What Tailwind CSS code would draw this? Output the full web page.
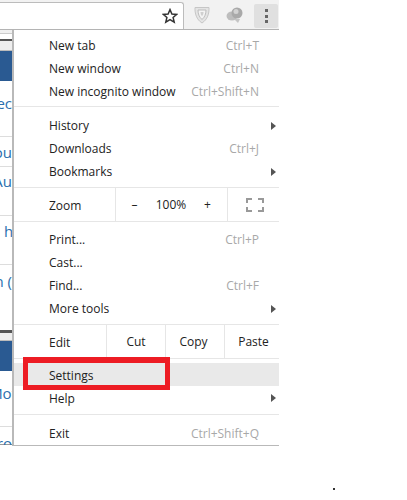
<!DOCTYPE html>
<html lang="en">
<head>
    <meta charset="UTF-8">
    <title>Chrome menu</title>
    <script src="https://cdn.jsdelivr.net/npm/@tailwindcss/browser@4"></script>
</head>
<body class="bg-white font-['Open_Sans','Noto_Sans',sans-serif] text-[12px] text-[#222]">
<div class="relative h-[500px] w-[407px] overflow-hidden">

    <!-- Toolbar -->
    <div class="flex h-[30px] w-[279px] border-b border-[#b4b4b4] bg-[#f2f2f2]">
        <div class="mt-[2px] flex h-[27px] w-[184px] items-center justify-end rounded-tr-[3px] border-t border-r border-[#bcbcbc] bg-white pr-[5px]">
            <svg class="h-[16px] w-[16px]" viewBox="0 0 16 16"><path d="M8 1.6l1.9 4.4 4.8.4-3.6 3.1 1.1 4.7L8 11.7l-4.2 2.5 1.1-4.7L1.3 6.400l4.800-.4z" fill="none" stroke="#333" stroke-width="1.500"/></svg>
        </div>
        <div class="ml-[9px] flex w-[18px] items-center justify-center">
            <svg class="h-[18px] w-[16px]" viewBox="0 0 16 18"><path d="M1 1.500h14c.3 6-1.500 12-7 15.500C2.500 13.500.7 7.500 1 1.500z" fill="#e4e4e4" stroke="#c6c6c6"/><path d="M4 4h8c0 4-1.200 7-4 9.500C5.200 11 4 8 4 4z" fill="#f4f4f4" stroke="#bdbdbd"/><path d="M6.500 6h3c0 2-.5 3-1.500 4.200C7 9 6.500 8 6.500 6z" fill="#cfcfcf"/></svg>
        </div>
        <div class="ml-[14px] flex w-[20px] items-center justify-center">
            <svg class="h-[18px] w-[18px]" viewBox="0 0 18 18"><ellipse cx="6" cy="10" rx="5.500" ry="4.500" fill="#bdbdbd"/><circle cx="11" cy="7" r="5.500" fill="#a9a9a9"/><circle cx="10" cy="5.500" r="2.500" fill="#d2d2d2"/><path d="M8 13h6l-2 4z" fill="#c4c4c4"/></svg>
        </div>
        <div class="mt-[4px] ml-[9px] flex h-[24px] w-[24px] flex-col items-center justify-center gap-[2.500px] rounded-[2px] bg-[#e0e0e0]">
            <span class="h-[3px] w-[3px] bg-[#666]"></span>
            <span class="h-[3px] w-[3px] bg-[#666]"></span>
            <span class="h-[3px] w-[3px] bg-[#666]"></span>
        </div>
    </div>

    <div class="flex w-[279px]">
        <!-- Page behind the menu -->
        <div class="flex h-[415px] w-[12px] flex-col items-end overflow-hidden text-[15px] leading-[20px] whitespace-nowrap text-[#2a6fae]">
            <div class="h-[4px] w-full shrink-0 border-b border-[#ccc] bg-[#f0f0f0]"></div>
            <div class="h-[7px] w-full shrink-0 border-b-2 border-[#555] bg-white"></div>
            <div class="h-[10px] w-full shrink-0 border-b border-[#bbb] bg-[#eeeeee]"></div>
            <div class="h-[30px] w-full shrink-0 bg-[#2a5a92]"></div>
            <div class="flex h-[56px] w-full shrink-0 justify-end border-b border-[#ddd] pt-[12px]">rec</div>
            <div class="flex h-[30px] w-full shrink-0 justify-end border-b border-[#ddd] pt-[5px]">ou</div>
            <div class="flex h-[49px] w-full shrink-0 justify-end border-b border-[#ddd] pt-[4px]">Au</div>
            <div class="flex h-[49px] w-full shrink-0 justify-start border-b border-[#ddd] pt-[5px] pl-[4px]">h</div>
            <div class="flex h-[65px] w-full shrink-0 justify-end pt-[6px]">n (</div>
            <div class="h-[3px] w-full shrink-0 bg-[#555]"></div>
            <div class="h-[8px] w-full shrink-0 border-b border-[#bbb] bg-[#eeeeee]"></div>
            <div class="h-[30px] w-full shrink-0 bg-[#2a5a92]"></div>
            <div class="flex h-[56px] w-full shrink-0 justify-end border-b border-[#ddd] pt-[12px] pr-[0px]"><span class="-mr-[5px]">Mot</span></div>
            <div class="flex h-[18px] w-full shrink-0 justify-end border-b border-[#999] pt-[6px]">Fro</div>
        </div>

        <!-- Menu -->
        <div class="h-[416px] flex-1 border-b border-l-2 border-[#b9b9b9] bg-white">
            <div class="pt-[4px]">
                <div class="flex h-[23px] items-center justify-between pr-[20px] pl-[35px]"><span>New tab</span><span class="text-[#a8a8a8]">Ctrl+T</span></div>
                <div class="flex h-[23px] items-center justify-between pr-[20px] pl-[35px]"><span>New window</span><span class="text-[#a8a8a8]">Ctrl+N</span></div>
                <div class="flex h-[23px] items-center justify-between pr-[20px] pl-[35px]"><span>New incognito window</span><span class="text-[#a8a8a8]">Ctrl+Shift+N</span></div>
            </div>
            <div class="mt-[3px] h-px bg-[#e6e6e6]"></div>
            <div class="pt-[7px]">
                <div class="flex h-[23px] items-center justify-between pr-[3px] pl-[35px]"><span>History</span><span class="h-0 w-0 border-y-[4px] border-l-[5px] border-y-transparent border-l-[#555]"></span></div>
                <div class="flex h-[23px] items-center justify-between pr-[20px] pl-[35px]"><span>Downloads</span><span class="text-[#a8a8a8]">Ctrl+J</span></div>
                <div class="flex h-[23px] items-center justify-between pr-[3px] pl-[35px]"><span>Bookmarks</span><span class="h-0 w-0 border-y-[4px] border-l-[5px] border-y-transparent border-l-[#555]"></span></div>
            </div>
            <div class="mt-[4px] h-px bg-[#e6e6e6]"></div>
            <div class="flex h-[33px] items-center">
                <span class="w-[101px] pt-[2px] pl-[35px]">Zoom</span>
                <div class="flex h-full w-[112px] items-center border-l border-[#e6e6e6]">
                    <span class="w-[37px] text-center">–</span>
                    <span class="w-[36px] text-center">100%</span>
                    <span class="w-[37px] text-center">+</span>
                </div>
                <div class="flex h-full flex-1 items-center justify-center border-l border-[#e6e6e6] pl-[3px]">
                    <svg class="h-[14px] w-[18px]" viewBox="0 0 18 14"><path d="M1 5V1h5M12 1h5v4M17 9v4h-5M6 13H1V9" fill="none" stroke="#999" stroke-width="2"/></svg>
                </div>
            </div>
            <div class="h-px bg-[#e6e6e6]"></div>
            <div class="pt-[6px]">
                <div class="flex h-[23px] items-center justify-between pr-[20px] pl-[35px]"><span>Print...</span><span class="text-[#a8a8a8]">Ctrl+P</span></div>
                <div class="flex h-[23px] items-center pl-[35px]">Cast...</div>
                <div class="flex h-[23px] items-center justify-between pr-[20px] pl-[35px]"><span>Find...</span><span class="text-[#a8a8a8]">Ctrl+F</span></div>
                <div class="flex h-[23px] items-center justify-between pr-[3px] pl-[35px]"><span>More tools</span><span class="h-0 w-0 border-y-[4px] border-l-[5px] border-y-transparent border-l-[#555]"></span></div>
            </div>
            <div class="mt-[4px] h-px bg-[#e6e6e6]"></div>
            <div class="flex h-[33px] items-center">
                <span class="w-[92px] pt-[2px] pl-[35px]">Edit</span>
                <span class="flex h-full w-[59px] items-center justify-center border-l border-[#e6e6e6]">Cut</span>
                <span class="flex h-full w-[59px] items-center justify-center border-l border-[#e6e6e6] pr-[3px]">Copy</span>
                <span class="flex h-full flex-1 items-center justify-center border-l border-[#e6e6e6] pl-[3px]">Paste</span>
            </div>
            <div class="h-px bg-[#e6e6e6]"></div>
            <div class="pt-[4px]">
                <div class="flex h-[23px] items-center bg-[#e9e9e9] pt-[2px] pl-[35px]">Settings</div>
                <div class="flex h-[24px] items-center justify-between pr-[3px] pl-[35px]"><span class="pt-[2px]">Help</span><span class="h-0 w-0 border-y-[4px] border-l-[5px] border-y-transparent border-l-[#555]"></span></div>
            </div>
            <div class="mt-[4px] h-px bg-[#e6e6e6]"></div>
            <div class="flex h-[30px] items-center justify-between pt-[7px] pr-[20px] pl-[35px]"><span>Exit</span><span class="text-[#a8a8a8]">Ctrl+Shift+Q</span></div>
        </div>
    </div>

    <!-- Red highlight drawn over the menu -->
    <div class="absolute top-[357px] left-[23px] h-[33px] w-[147px] border-x-[5px] border-t-[6px] border-b-[5px] border-[#ed1c24]"></div>
    <!-- Stray pixel -->
    <div class="absolute top-[488px] left-[333px] h-[2px] w-[2px] bg-[#333]"></div>
</div>
</body>
</html>
